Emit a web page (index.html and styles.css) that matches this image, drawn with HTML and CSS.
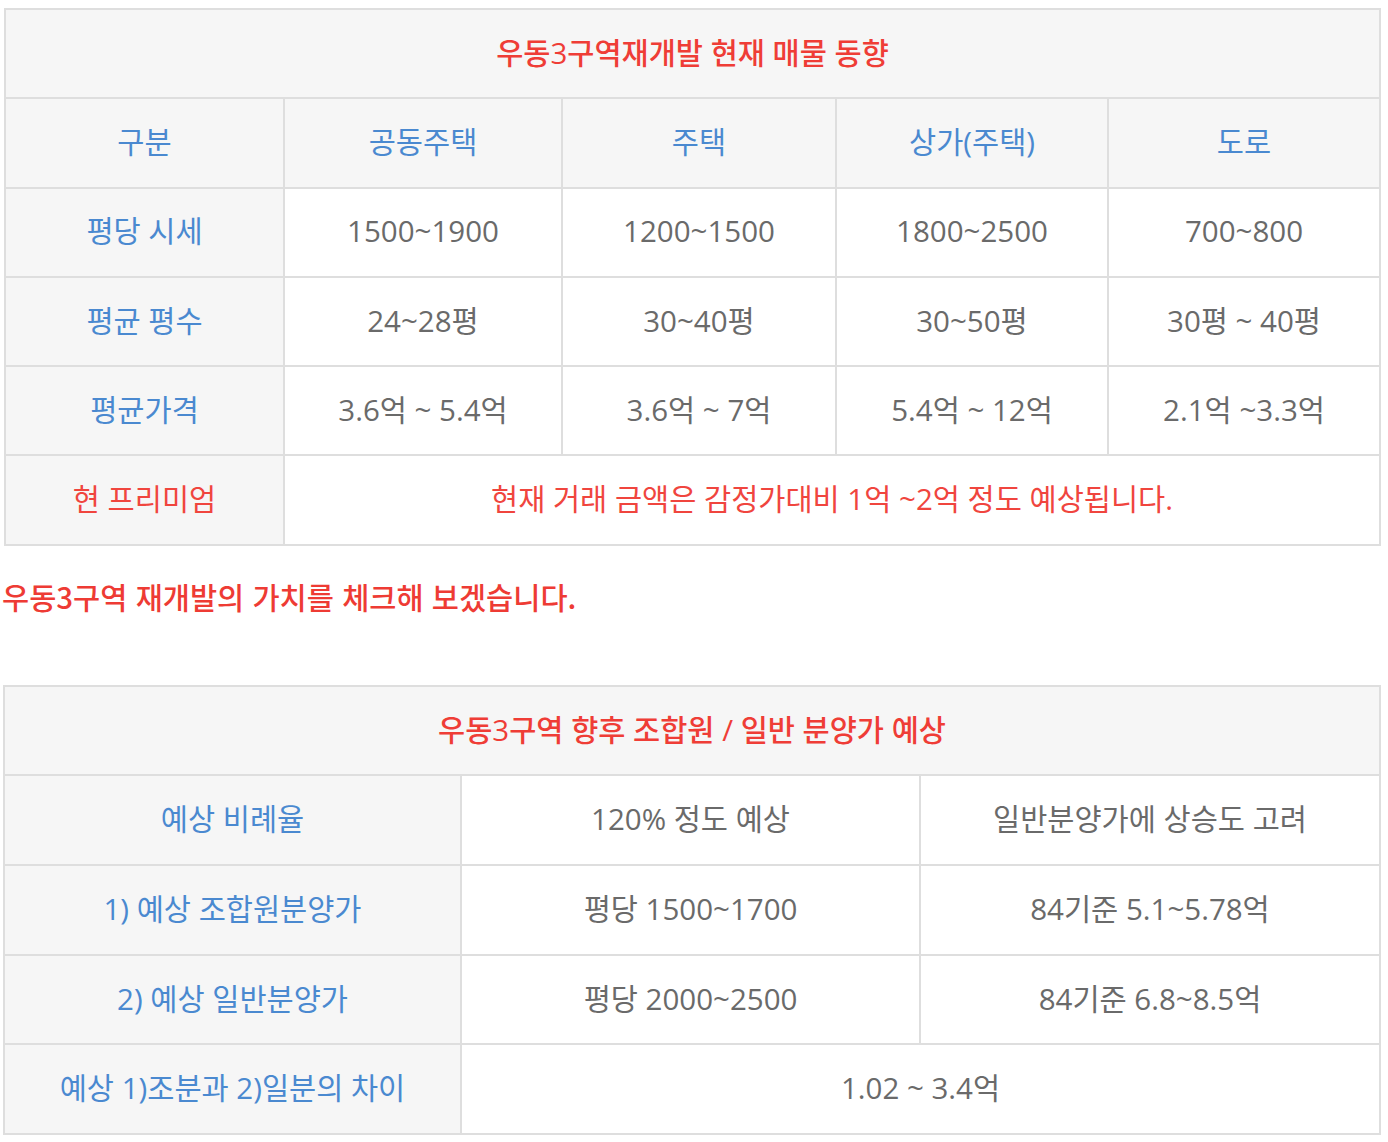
FILE: index.html
```html
<!DOCTYPE html>
<html lang="ko">
<head>
<meta charset="utf-8">
<link rel="stylesheet" href="styles.css">
</head>
<body>
<div class="page">
  <table class="grid t1">
    <colgroup>
      <col class="c1a"><col class="c1b"><col class="c1c"><col class="c1d"><col class="c1e">
    </colgroup>
    <tr><th colspan="5" class="title">우동3구역재개발 현재 매물 동향</th></tr>
    <tr class="head">
      <th class="lbl">구분</th><th class="lbl">공동주택</th><th class="lbl">주택</th><th class="lbl">상가(주택)</th><th class="lbl">도로</th>
    </tr>
    <tr><th class="lbl">평당 시세</th><td>1500~1900</td><td>1200~1500</td><td>1800~2500</td><td>700~800</td></tr>
    <tr><th class="lbl">평균 평수</th><td>24~28평</td><td>30~40평</td><td>30~50평</td><td>30평 ~ 40평</td></tr>
    <tr><th class="lbl">평균가격</th><td>3.6억 ~ 5.4억</td><td>3.6억 ~ 7억</td><td>5.4억 ~ 12억</td><td>2.1억 ~3.3억</td></tr>
    <tr><th class="red">현 프리미엄</th><td colspan="4" class="red">현재 거래 금액은 감정가대비 1억 ~2억 정도 예상됩니다.</td></tr>
  </table>

  <p class="note">우동3구역 재개발의 가치를 체크해 보겠습니다.</p>

  <table class="grid t2">
    <colgroup>
      <col class="c2a"><col class="c2b"><col class="c2c">
    </colgroup>
    <tr><th colspan="3" class="title">우동3구역 향후 조합원 / 일반 분양가 예상</th></tr>
    <tr><th class="lbl">예상 비례율</th><td>120% 정도 예상</td><td>일반분양가에 상승도 고려</td></tr>
    <tr><th class="lbl">1) 예상 조합원분양가</th><td>평당 1500~1700</td><td>84기준 5.1~5.78억</td></tr>
    <tr><th class="lbl">2) 예상 일반분양가</th><td>평당 2000~2500</td><td>84기준 6.8~8.5억</td></tr>
    <tr><th class="lbl">예상 1)조분과 2)일분의 차이</th><td colspan="2">1.02 ~ 3.4억</td></tr>
  </table>
</div>
</body>
</html>
```

FILE: styles.css
```css
html, body {
  margin: 0;
  padding: 0;
  background: #ffffff;
}
.page {
  padding: 8px 8px 0 3px;
  font-family: "Open Sans", "Noto Sans CJK KR", sans-serif;
}
.grid {
  border-collapse: collapse;
  table-layout: fixed;
  border: 2px solid #dedede;
}
.t1 { margin-left: 1px; width: 1375px; }
.t2 { width: 1376px; }
.grid th, .grid td {
  border: 2px solid #dedede;
  height: 85.3px;
  padding: 0 0 2px 0;
  text-align: center;
  vertical-align: middle;
  font-size: 29.5px;
  font-weight: 400;
  line-height: 1;
}
.t2 th, .t2 td { height: 85.6px; }
.grid th { background: #f6f6f6; }
.grid td { background: #ffffff; color: #6a6a6a; }
.grid .lbl { color: #4a89d0; }
.grid .red { color: #f0453e; }
.grid .title { color: #ef3d36; font-weight: 500; font-size: 29.5px; }
.c1a { width: 279px; }
.c1b { width: 278px; }
.c1c { width: 274px; }
.c1d { width: 272px; }
.c1e { width: 272px; }
.c2a { width: 457px; }
.c2b { width: 459px; }
.c2c { width: 460px; }
.note {
  margin: 34px 0 73px -1px;
  color: #ee3b34;
  font-family: "Noto Sans CJK KR", sans-serif;
  font-size: 29.5px;
  font-weight: 500;
  line-height: 32px;
}
```
